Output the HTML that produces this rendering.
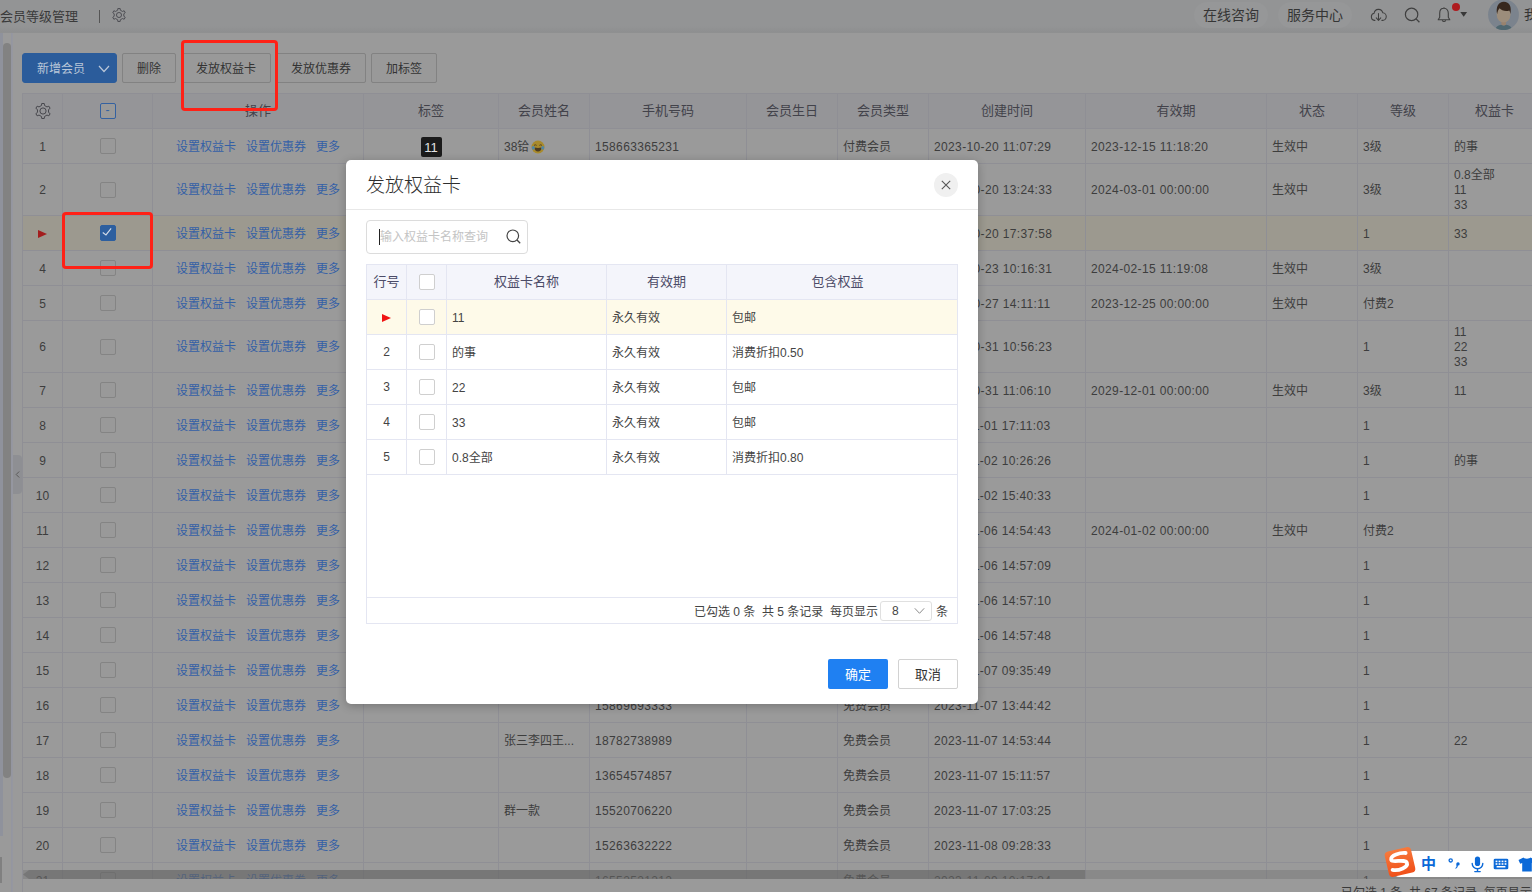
<!DOCTYPE html>
<html lang="zh-CN">
<head>
<meta charset="utf-8">
<title>会员等级管理</title>
<style>
*{box-sizing:border-box;margin:0;padding:0}
html,body{width:1532px;height:892px;overflow:hidden}
body{position:relative;background:#9a9a9a;font-family:"Liberation Sans","Noto Sans CJK SC",sans-serif;font-size:12px;color:#3c3c3c}
svg{display:block}
/* ---------- top bar ---------- */
#top{position:absolute;left:0;top:0;width:1532px;height:33px;background:linear-gradient(#939495 0,#939495 26px,#8e8f90 32px,#909191 33px)}
#top .ttl{position:absolute;left:0;top:7px;font-size:13px;line-height:19px;color:#3a3a3a;white-space:nowrap}
#top .sep{position:absolute;left:99px;top:10px;width:1px;height:13px;background:#555}
#top .gear{position:absolute;left:111.500px;top:7.500px;width:14px;height:14px}
.g2{width:16px;height:16px;margin:0 auto}
.pill{position:absolute;top:2px;height:26px;border-radius:13px;background:#969798;font-size:14px;line-height:26px;text-align:center;color:#353535}
.ico{position:absolute}
/* ---------- left strip ---------- */
#ls1{position:absolute;left:11px;top:33px;width:2px;height:859px;background:linear-gradient(90deg,#9496a0 0,#9496a0 1px,#9798a0 2px)}
#ls2{position:absolute;left:3px;top:43px;width:8px;height:735px;background:#828282;border-radius:4px}
#ls0{position:absolute;left:0;top:33px;width:3px;height:803px;background:#8f929c}
#ls3{position:absolute;left:0;top:857px;width:2px;height:26px;background:#808080}
#hand{position:absolute;left:13px;top:455px;width:9px;height:39px;background:#8e8f93;border-radius:0 4px 4px 0}
/* ---------- toolbar ---------- */
.btn{position:absolute;top:53px;height:30px;border:1px solid #828282;border-radius:2px;background:#999;font-size:12px;line-height:30px;text-align:center;color:#333}
.btn.pri{background:#2b5c9b;border-color:#2b5c9b;color:#b9c6d8;border-radius:3px;text-align:left;padding-left:14px}
/* ---------- grid ---------- */
#grid{position:absolute;left:22px;top:93px;width:1600px;border-collapse:collapse;table-layout:fixed;background:#9a9a9a}
#grid td,#grid th{border:1px solid #8f8f95;padding:2px 0 0 5px;font-weight:normal;text-align:left;white-space:nowrap;overflow:hidden;font-size:12px;line-height:16px;color:#3d3d3d}
#grid th{height:35px;background:#959598;font-size:13px;text-align:center;padding:0;color:#42424a}
#grid td.c{text-align:center;padding:2px 0 0 0}
#grid td.n{letter-spacing:.36px}
#grid tr.tall td{padding-top:0}
#grid tr.tall td.ml{line-height:15px;padding-top:2px}
#grid tr.tall .cb{top:0}
#grid tr.sel td{background:#9c998f}
#grid a{color:#3460a6;margin:0 5px}
.cb{display:inline-block;width:16px;height:16px;border:1px solid #848484;border-radius:2px;vertical-align:middle;background:#999;position:relative;top:-1px}
.cb.on{background:#2d5f9f;border-color:#2d5f9f}
.cb.on svg{width:14px;height:14px}
.cb.hd{top:0;border-color:#3461a0;color:#3461a0;font-size:12px;line-height:13px;text-align:center}
.tri{display:inline-block;width:0;height:0;border-left:9px solid #a31d1d;border-top:4px solid transparent;border-bottom:4px solid transparent;vertical-align:middle;position:relative;top:-1px}
.tag{display:inline-block;width:21px;height:20px;background:#1b1b1b;color:#e2e2e2;border-radius:2px;font-size:13px;line-height:21px;vertical-align:middle;position:relative;top:0}
.emo{display:inline-block;position:relative;width:14px;height:14px;vertical-align:-3px;margin-left:2px;font-size:0;line-height:0;overflow:hidden}
.emo svg{position:absolute;left:0;top:0;width:14px;height:14px}
#hsbt{position:absolute;left:23px;top:870px;width:1509px;height:9px;background:rgba(110,110,110,.38)}
#hsb{position:absolute;left:23px;top:870px;width:1062px;height:9px}
#hsba{position:absolute;left:23px;top:870px;width:0;height:0;border-right:6px solid #7a7a7a;border-top:4.500px solid transparent;border-bottom:4.500px solid transparent}
#foot{position:absolute;left:23px;top:879px;width:1509px;height:13px;background:#9a9a9a}
#foot span{position:absolute;left:1318px;top:5px;font-size:12px;line-height:18px;white-space:nowrap;color:#3a3a3a}
.red{position:absolute;border:3px solid #ff2116;border-radius:4px}

/* ---------- modal ---------- */
#modal{position:absolute;left:346px;top:160px;width:632px;height:544px;background:#fff;border-radius:5px;box-shadow:0 2px 10px rgba(0,0,0,.24)}
#modal .hd{position:absolute;left:0;top:0;width:632px;height:50px;border-bottom:1px solid #e8e8e8}
#modal .hd b{position:absolute;left:20px;top:12px;font-weight:300;font-size:19px;line-height:28px;color:#2e2e2e;white-space:nowrap}
#modal .x{position:absolute;left:588px;top:13px;width:24px;height:24px;border-radius:12px;background:#f0f0f0}
#modal .x svg{position:absolute;left:7px;top:7px;width:10px;height:10px}
#modal .inp{position:absolute;left:20px;top:60px;width:162px;height:34px;border:1px solid #dcdcdc;border-radius:4px}
#modal .inp span{position:absolute;left:13px;top:7px;font-size:12px;line-height:18px;color:#c4c4c4;white-space:nowrap}
#modal .inp i{position:absolute;left:12px;top:8px;width:1px;height:16px;background:#222}
#modal .inp svg{position:absolute;left:138px;top:7px;width:17px;height:17px}
#mt{position:absolute;left:20px;top:104px;width:591px;border-collapse:collapse;table-layout:fixed}
#mt td,#mt th{border:1px solid #e4e6f2;height:35px;font-weight:normal;font-size:12px;line-height:16px;color:#444;text-align:left;padding:2px 0 0 5px;white-space:nowrap}
#mt th{background:#f4f5fb;font-size:13px;color:#4c4c68;text-align:center;padding:0}
#mt td.c{text-align:center;padding:0}
#mt tr.cur td{background:#fefae9}
.cb2{display:inline-block;width:16px;height:16px;border:1px solid #cfcfcf;border-radius:2px;background:#fff;vertical-align:middle}
.tri2{display:inline-block;width:0;height:0;border-left:9px solid #f01414;border-top:4px solid transparent;border-bottom:4px solid transparent;vertical-align:middle}
#mbox{position:absolute;left:20px;top:104px;width:592px;height:360px;border:1px solid #e4e6f2;pointer-events:none}
#mfoot{position:absolute;left:20px;top:437px;width:592px;height:27px;border:1px solid #e4e6f2;font-size:12px;color:#444}
#mfoot .t{position:absolute;top:5px;line-height:18px;white-space:nowrap}
#mfoot .sel{position:absolute;left:513px;top:3px;width:52px;height:20px;border:1px solid #e0e0e0;border-radius:3px}
#mfoot .sel span{position:absolute;left:11px;top:0;line-height:18px}
#mfoot .sel svg{position:absolute;left:33px;top:5px;width:11px;height:8px}
.mb{position:absolute;top:499px;width:60px;height:30px;border-radius:2px;font-size:13px;line-height:32px;text-align:center}
.mb.ok{left:482px;background:#1f80f2;color:#fff}
.mb.no{left:552px;background:#fff;border:1px solid #d2d2d2;color:#333;line-height:30px}

/* ---------- IME ---------- */
#ime .bar{position:absolute;left:1395px;top:851px;width:150px;height:26px;background:#fff;border-radius:4px 0 0 4px}
#ime .lg{position:absolute;left:1383px;top:845px;width:34px;height:34px}
#ime .zh{position:absolute;left:1421px;top:853px;font-size:15px;line-height:22px;font-weight:bold;color:#0b69d8}
#ime .pn{position:absolute;left:1448px;top:857px;width:12px;height:14px}
#ime .mic{position:absolute;left:1471px;top:856px;width:13px;height:17px}
#ime .kb{position:absolute;left:1493px;top:858px;width:16px;height:12px}
#ime .sh{position:absolute;left:1518px;top:857px;width:18px;height:15px}
</style>
</head>
<body>
<div id="top">
  <div class="ttl">会员等级管理</div>
  <div class="sep"></div>
  <svg class="gear" viewBox="0 0 16 16"><path d="M6.47 2.51 L6.73 0.51 L9.27 0.51 L9.53 2.51 L11.99 3.93 L13.86 3.16 L15.12 5.35 L13.52 6.58 L13.52 9.42 L15.12 10.65 L13.86 12.84 L11.99 12.07 L9.53 13.49 L9.27 15.49 L6.73 15.49 L6.47 13.49 L4.01 12.07 L2.14 12.84 L0.88 10.65 L2.48 9.42 L2.48 6.58 L0.88 5.35 L2.14 3.16 L4.01 3.93Z" fill="none" stroke="#45454b" stroke-width="1" stroke-linejoin="round"/><circle cx="8" cy="8" r="2.900" fill="none" stroke="#45454b" stroke-width="1"/></svg>
  <div class="pill" style="left:1194px;width:74px">在线咨询</div>
  <div class="pill" style="left:1278px;width:74px">服务中心</div>
  <svg class="ico" style="left:1370px;top:7px;width:17px;height:16px" viewBox="0 0 18 16" preserveAspectRatio="none"><path d="M5.200 13.400H4.600A3.600 3.600 0 0 1 4.300 6.300A4.800 4.800 0 0 1 13.600 5.800A3.800 3.800 0 0 1 13.200 13.400H12.600" fill="none" stroke="#3f3f3f" stroke-width="1.1" stroke-linecap="round"/><path d="M9 6.500V13.200M6.600 10.900L9 13.400L11.400 10.900" fill="none" stroke="#3f3f3f" stroke-width="1.1" stroke-linecap="round" stroke-linejoin="round"/></svg>
  <svg class="ico" style="left:1404px;top:7px;width:17px;height:17px" viewBox="0 0 17 17"><circle cx="7.600" cy="7.400" r="6.200" fill="none" stroke="#3f3f3f" stroke-width="1.2"/><path d="M12.100 11.900L15.400 15.200" stroke="#3f3f3f" stroke-width="1.3" fill="none"/></svg>
  <svg class="ico" style="left:1436px;top:6px;width:16px;height:18px" viewBox="0 0 16 18"><path d="M8 1.300V2.300M8 2.300C5.200 2.300 3.700 4.500 3.700 7.200V11.200L2.200 13.700H13.800L12.300 11.200V7.200C12.300 4.500 10.800 2.300 8 2.300Z" fill="none" stroke="#3f3f3f" stroke-width="1.1" stroke-linejoin="round"/><path d="M6.300 14.300A1.800 1.800 0 0 0 9.700 14.300" fill="none" stroke="#3f3f3f" stroke-width="1.1"/></svg>
  <div class="ico" style="left:1452px;top:3px;width:8px;height:8px;border-radius:4px;background:#ae1b1f"></div>
  <svg class="ico" style="left:1460px;top:12px;width:8px;height:6px" viewBox="0 0 8 6"><path d="M.3 0H7.100L3.700 4.800Z" fill="#383838"/></svg>
  <svg class="ico" style="left:1488px;top:-1px;width:31px;height:31px" viewBox="0 0 31 31"><defs><clipPath id="avc"><circle cx="15.500" cy="15.700" r="15.400"/></clipPath></defs><g clip-path="url(#avc)"><rect width="31" height="31" fill="#7b838d"/><path d="M7.500 31C7.500 27.500 10.500 26.200 13.300 25.700Q15.700 27.300 18.200 25.700C21 26.200 24 27.500 24 31Z" fill="#4f6770"/><path d="M13.400 21.500H18V25.800Q15.700 27.400 13.400 25.800Z" fill="#98826d"/><ellipse cx="15.600" cy="15.600" rx="6.900" ry="7.900" fill="#9c8d7b"/><path d="M9.100 15.200C7.600 8 10.500 2.800 15.800 2.800C21.500 2.800 24 8 22.300 15.200C22.200 13.300 21.800 12.200 21.300 11.500C17.500 12.800 13.500 11.500 11.500 9.300C10.300 10.800 9.500 12.800 9.100 15.200Z" fill="#37271d"/></g></svg>
  <div class="ico" style="left:1524px;top:5px;font-size:13px;line-height:20px;color:#353535;white-space:nowrap">我的</div>
</div>
<div id="ls1"></div><div id="ls3"></div><div id="ls0"></div><div id="ls2"></div><div id="hand"><svg viewBox="0 0 9 39" style="width:9px;height:39px"><path d="M6.200 16.500L3.200 19.500L6.200 22.500" fill="none" stroke="#5a5a5a" stroke-width="1"/></svg></div>

<div class="btn pri" style="left:22px;width:95px">新增会员<svg style="position:absolute;left:75px;top:11px;width:12px;height:8px" viewBox="0 0 12 8"><path d="M1 1L6 6.500L11 1" fill="none" stroke="#b9c6d8" stroke-width="1.200"/></svg></div>
<div class="btn" style="left:122px;width:54px">删除</div>
<div class="btn" style="left:181px;width:90px">发放权益卡</div>
<div class="btn" style="left:276px;width:90px">发放优惠券</div>
<div class="btn" style="left:371px;width:66px">加标签</div>

<table id="grid">
<colgroup><col style="width:40px"><col style="width:90px"><col style="width:211px"><col style="width:135px"><col style="width:91px"><col style="width:157px"><col style="width:91px"><col style="width:91px"><col style="width:157px"><col style="width:181px"><col style="width:91px"><col style="width:91px"><col style="width:174px"></colgroup>
<thead><tr><th><svg class="g2" viewBox="0 0 16 16"><path d="M6.47 2.51 L6.73 0.51 L9.27 0.51 L9.53 2.51 L11.99 3.93 L13.86 3.16 L15.12 5.35 L13.52 6.58 L13.52 9.42 L15.12 10.65 L13.86 12.84 L11.99 12.07 L9.53 13.49 L9.27 15.49 L6.73 15.49 L6.47 13.49 L4.01 12.07 L2.14 12.84 L0.88 10.65 L2.48 9.42 L2.48 6.58 L0.88 5.35 L2.14 3.16 L4.01 3.93Z" fill="none" stroke="#47474d" stroke-width="1" stroke-linejoin="round"/><circle cx="8" cy="8" r="3.100" fill="none" stroke="#47474d" stroke-width="1"/></svg></th><th><span class="cb hd">-</span></th><th>操作</th><th>标签</th><th>会员姓名</th><th>手机号码</th><th>会员生日</th><th>会员类型</th><th>创建时间</th><th>有效期</th><th>状态</th><th>等级</th><th style="text-align:left;padding-left:26px">权益卡</th></tr></thead>
<tbody>
<tr style="height:35px"><td class="c">1</td><td class="c"><span class="cb"></span></td><td class="c op"><a>设置权益卡</a><a>设置优惠券</a><a>更多</a></td><td class="c"><span class="tag">11</span></td><td>38铪<span class="emo">😂<svg viewBox="0 0 14 14"><circle cx="7" cy="7" r="6.5" fill="#a88a2c"/><path d="M3.4 7.6 Q7 8.4 10.6 7.6 Q10.2 11.6 7 11.6 Q3.8 11.6 3.4 7.6Z" fill="#4a3a22"/><path d="M3 5.4 Q4.3 4.2 5.6 5.4 M8.4 5.4 Q9.7 4.2 11 5.4" stroke="#4a3a22" stroke-width=".9" fill="none"/><ellipse cx="2.3" cy="7.8" rx="1.5" ry="1.9" fill="#4f86a8"/><ellipse cx="11.7" cy="7.8" rx="1.5" ry="1.9" fill="#4f86a8"/></svg></span></td><td class="n">158663365231</td><td></td><td>付费会员</td><td class="n">2023-10-20 11:07:29</td><td class="n">2023-12-15 11:18:20</td><td>生效中</td><td>3级</td><td>的事</td></tr>
<tr class="tall" style="height:52px"><td class="c">2</td><td class="c"><span class="cb"></span></td><td class="c op"><a>设置权益卡</a><a>设置优惠券</a><a>更多</a></td><td class="c"></td><td></td><td class="n">13500001111</td><td></td><td>付费会员</td><td class="n">2023-10-20 13:24:33</td><td class="n">2024-03-01 00:00:00</td><td>生效中</td><td>3级</td><td class="ml">0.8全部<br>11<br>33</td></tr>
<tr class="sel" style="height:35px"><td class="c"><i class="tri"></i></td><td class="c"><span class="cb on"><svg viewBox="0 0 16 16"><path d="M2 7.400 L5.700 10.200 L11.600 2.800" fill="none" stroke="#d3dbe8" stroke-width="1.300"/></svg></span></td><td class="c op"><a>设置权益卡</a><a>设置优惠券</a><a>更多</a></td><td class="c"></td><td></td><td class="n">13500002222</td><td></td><td>免费会员</td><td class="n">2023-10-20 17:37:58</td><td class="n"></td><td></td><td>1</td><td>33</td></tr>
<tr style="height:35px"><td class="c">4</td><td class="c"><span class="cb"></span></td><td class="c op"><a>设置权益卡</a><a>设置优惠券</a><a>更多</a></td><td class="c"></td><td></td><td class="n">13500003333</td><td></td><td>付费会员</td><td class="n">2023-10-23 10:16:31</td><td class="n">2024-02-15 11:19:08</td><td>生效中</td><td>3级</td><td></td></tr>
<tr style="height:35px"><td class="c">5</td><td class="c"><span class="cb"></span></td><td class="c op"><a>设置权益卡</a><a>设置优惠券</a><a>更多</a></td><td class="c"></td><td></td><td class="n">13500004444</td><td></td><td>付费会员</td><td class="n">2023-10-27 14:11:11</td><td class="n">2023-12-25 00:00:00</td><td>生效中</td><td>付费2</td><td></td></tr>
<tr class="tall" style="height:52px"><td class="c">6</td><td class="c"><span class="cb"></span></td><td class="c op"><a>设置权益卡</a><a>设置优惠券</a><a>更多</a></td><td class="c"></td><td></td><td class="n">13500005555</td><td></td><td>免费会员</td><td class="n">2023-10-31 10:56:23</td><td class="n"></td><td></td><td>1</td><td class="ml">11<br>22<br>33</td></tr>
<tr style="height:35px"><td class="c">7</td><td class="c"><span class="cb"></span></td><td class="c op"><a>设置权益卡</a><a>设置优惠券</a><a>更多</a></td><td class="c"></td><td></td><td class="n">13500006666</td><td></td><td>付费会员</td><td class="n">2023-10-31 11:06:10</td><td class="n">2029-12-01 00:00:00</td><td>生效中</td><td>3级</td><td>11</td></tr>
<tr style="height:35px"><td class="c">8</td><td class="c"><span class="cb"></span></td><td class="c op"><a>设置权益卡</a><a>设置优惠券</a><a>更多</a></td><td class="c"></td><td></td><td class="n">13500007777</td><td></td><td>免费会员</td><td class="n">2023-11-01 17:11:03</td><td class="n"></td><td></td><td>1</td><td></td></tr>
<tr style="height:35px"><td class="c">9</td><td class="c"><span class="cb"></span></td><td class="c op"><a>设置权益卡</a><a>设置优惠券</a><a>更多</a></td><td class="c"></td><td></td><td class="n">13500008888</td><td></td><td>免费会员</td><td class="n">2023-11-02 10:26:26</td><td class="n"></td><td></td><td>1</td><td>的事</td></tr>
<tr style="height:35px"><td class="c">10</td><td class="c"><span class="cb"></span></td><td class="c op"><a>设置权益卡</a><a>设置优惠券</a><a>更多</a></td><td class="c"></td><td></td><td class="n">13500009999</td><td></td><td>免费会员</td><td class="n">2023-11-02 15:40:33</td><td class="n"></td><td></td><td>1</td><td></td></tr>
<tr style="height:35px"><td class="c">11</td><td class="c"><span class="cb"></span></td><td class="c op"><a>设置权益卡</a><a>设置优惠券</a><a>更多</a></td><td class="c"></td><td></td><td class="n">13500010000</td><td></td><td>付费会员</td><td class="n">2023-11-06 14:54:43</td><td class="n">2024-01-02 00:00:00</td><td>生效中</td><td>付费2</td><td></td></tr>
<tr style="height:35px"><td class="c">12</td><td class="c"><span class="cb"></span></td><td class="c op"><a>设置权益卡</a><a>设置优惠券</a><a>更多</a></td><td class="c"></td><td></td><td class="n">13500011111</td><td></td><td>免费会员</td><td class="n">2023-11-06 14:57:09</td><td class="n"></td><td></td><td>1</td><td></td></tr>
<tr style="height:35px"><td class="c">13</td><td class="c"><span class="cb"></span></td><td class="c op"><a>设置权益卡</a><a>设置优惠券</a><a>更多</a></td><td class="c"></td><td></td><td class="n">13500012222</td><td></td><td>免费会员</td><td class="n">2023-11-06 14:57:10</td><td class="n"></td><td></td><td>1</td><td></td></tr>
<tr style="height:35px"><td class="c">14</td><td class="c"><span class="cb"></span></td><td class="c op"><a>设置权益卡</a><a>设置优惠券</a><a>更多</a></td><td class="c"></td><td></td><td class="n">13500013333</td><td></td><td>免费会员</td><td class="n">2023-11-06 14:57:48</td><td class="n"></td><td></td><td>1</td><td></td></tr>
<tr style="height:35px"><td class="c">15</td><td class="c"><span class="cb"></span></td><td class="c op"><a>设置权益卡</a><a>设置优惠券</a><a>更多</a></td><td class="c"></td><td></td><td class="n">13500014444</td><td></td><td>免费会员</td><td class="n">2023-11-07 09:35:49</td><td class="n"></td><td></td><td>1</td><td></td></tr>
<tr style="height:35px"><td class="c">16</td><td class="c"><span class="cb"></span></td><td class="c op"><a>设置权益卡</a><a>设置优惠券</a><a>更多</a></td><td class="c"></td><td></td><td class="n">15869693333</td><td></td><td>免费会员</td><td class="n">2023-11-07 13:44:42</td><td class="n"></td><td></td><td>1</td><td></td></tr>
<tr style="height:35px"><td class="c">17</td><td class="c"><span class="cb"></span></td><td class="c op"><a>设置权益卡</a><a>设置优惠券</a><a>更多</a></td><td class="c"></td><td>张三李四王...</td><td class="n">18782738989</td><td></td><td>免费会员</td><td class="n">2023-11-07 14:53:44</td><td class="n"></td><td></td><td>1</td><td>22</td></tr>
<tr style="height:35px"><td class="c">18</td><td class="c"><span class="cb"></span></td><td class="c op"><a>设置权益卡</a><a>设置优惠券</a><a>更多</a></td><td class="c"></td><td></td><td class="n">13654574857</td><td></td><td>免费会员</td><td class="n">2023-11-07 15:11:57</td><td class="n"></td><td></td><td>1</td><td></td></tr>
<tr style="height:35px"><td class="c">19</td><td class="c"><span class="cb"></span></td><td class="c op"><a>设置权益卡</a><a>设置优惠券</a><a>更多</a></td><td class="c"></td><td>群一款</td><td class="n">15520706220</td><td></td><td>免费会员</td><td class="n">2023-11-07 17:03:25</td><td class="n"></td><td></td><td>1</td><td></td></tr>
<tr style="height:35px"><td class="c">20</td><td class="c"><span class="cb"></span></td><td class="c op"><a>设置权益卡</a><a>设置优惠券</a><a>更多</a></td><td class="c"></td><td></td><td class="n">15263632222</td><td></td><td>免费会员</td><td class="n">2023-11-08 09:28:33</td><td class="n"></td><td></td><td>1</td><td></td></tr>
<tr style="height:35px"><td class="c">21</td><td class="c"><span class="cb"></span></td><td class="c op"><a>设置权益卡</a><a>设置优惠券</a><a>更多</a></td><td class="c"></td><td></td><td class="n">16552521212</td><td></td><td>免费会员</td><td class="n">2023-11-09 10:17:34</td><td class="n"></td><td></td><td>1</td><td></td></tr>

</tbody>
</table>
<div id="hsbt"></div><svg id="hsb" viewBox="0 0 1062 9"><path d="M0 4.500L6 0H1062V9H6Z" fill="rgba(95,95,95,.42)"/></svg>
<div id="foot"><span>已勾选 1 条&nbsp; 共 67 条记录&nbsp; 每页显示</span></div>

<div id="modal">
  <div class="hd"><b>发放权益卡</b><div class="x"><svg viewBox="0 0 10 10"><path d="M.8 .8L9.200 9.200M9.200 .8L.8 9.200" stroke="#555" stroke-width="1.100" fill="none"/></svg></div></div>
  <div class="inp"><span>输入权益卡名称查询</span><i></i><svg viewBox="0 0 17 17"><circle cx="7.8" cy="7.8" r="5.8" fill="none" stroke="#444" stroke-width="1.2"/><path d="M12 12L15.200 15.200" stroke="#444" stroke-width="1.3" fill="none"/></svg></div>
  <div id="mbox"></div>
  <table id="mt">
  <colgroup><col style="width:40px"><col style="width:40px"><col style="width:160px"><col style="width:120px"><col style="width:231px"></colgroup>
  <thead><tr><th>行号</th><th><span class="cb2"></span></th><th>权益卡名称</th><th>有效期</th><th style="padding-right:9px">包含权益</th></tr></thead>
  <tbody>
<tr class="cur"><td class="c"><i class="tri2"></i></td><td class="c"><span class="cb2"></span></td><td>11</td><td>永久有效</td><td>包邮</td></tr>
<tr><td class="c">2</td><td class="c"><span class="cb2"></span></td><td>的事</td><td>永久有效</td><td>消费折扣0.50</td></tr>
<tr><td class="c">3</td><td class="c"><span class="cb2"></span></td><td>22</td><td>永久有效</td><td>包邮</td></tr>
<tr><td class="c">4</td><td class="c"><span class="cb2"></span></td><td>33</td><td>永久有效</td><td>包邮</td></tr>
<tr><td class="c">5</td><td class="c"><span class="cb2"></span></td><td>0.8全部</td><td>永久有效</td><td>消费折扣0.80</td></tr>

  </tbody></table>
  <div id="mfoot"><span class="t" style="left:327px">已勾选 0 条&nbsp; 共 5 条记录&nbsp; 每页显示</span><div class="sel"><span>8</span><svg viewBox="0 0 11 8"><path d="M.8 1.300L5.500 6.300L10.200 1.300" fill="none" stroke="#8a8a8a" stroke-width="1"/></svg></div><span class="t" style="left:569px">条</span></div>
  <div class="mb ok">确定</div><div class="mb no">取消</div>
</div>

<div class="red" style="left:181px;top:40px;width:97px;height:71px"></div>
<div class="red" style="left:62px;top:212px;width:91px;height:57px"></div>
<div id="ime"><div class="bar"></div>
<svg class="lg" viewBox="0 0 34 34"><defs><linearGradient id="og" x1="0" y1="0" x2="0" y2="1"><stop offset="0" stop-color="#f77a3c"/><stop offset="1" stop-color="#f0501a"/></linearGradient></defs><g transform="rotate(-13 17 17)"><rect x="3.500" y="4" width="27" height="26" rx="4" fill="url(#og)"/><path d="M24.500 9.500C19 7.800 9.500 8.200 9 12.500C8.600 16.400 23 14.600 23.500 19.500C24 24 14 25.500 8 23" fill="none" stroke="#fff" stroke-width="3.800" stroke-linecap="round"/></g></svg>
<span class="zh">中</span>
<svg class="pn" viewBox="0 0 12 14"><circle cx="2.700" cy="3.400" r="1.600" fill="none" stroke="#0b69d8" stroke-width="1.300"/><path d="M8.300 6.800A1.700 1.700 0 1 1 9.900 8.600C9.900 10 9 11.200 7.600 11.800L7.200 11C8 10.600 8.500 10 8.500 9.200C8.300 8.600 8.300 7.600 8.300 6.800Z" fill="#0b69d8"/></svg>
<svg class="mic" viewBox="0 0 13 17"><rect x="3.900" y="0.500" width="5.200" height="9.600" rx="2.600" fill="#0b69d8"/><path d="M1.200 7.500A5.300 5.300 0 0 0 11.800 7.500M6.500 12.800V15.200M3.800 15.600H9.200" fill="none" stroke="#0b69d8" stroke-width="1.400" stroke-linecap="round"/></svg>
<svg class="kb" viewBox="0 0 16 12"><rect x=".7" y=".7" width="14.600" height="10.600" rx="1.400" fill="#0b69d8"/><g fill="#fff"><rect x="2.600" y="2.600" width="1.800" height="1.600"/><rect x="5.600" y="2.600" width="1.800" height="1.600"/><rect x="8.600" y="2.600" width="1.800" height="1.600"/><rect x="11.600" y="2.600" width="1.800" height="1.600"/><rect x="2.600" y="5.200" width="1.800" height="1.600"/><rect x="5.600" y="5.200" width="1.800" height="1.600"/><rect x="8.600" y="5.200" width="1.800" height="1.600"/><rect x="11.600" y="5.200" width="1.800" height="1.600"/><rect x="3.600" y="8" width="8.800" height="1.500"/></g></svg>
<svg class="sh" viewBox="0 0 18 15"><path d="M5.500 0.500C6.500 2 11.500 2 12.500 0.500L17.500 3L15.800 6.800L13.800 6V14.500H4.200V6L2.200 6.800L0.500 3Z" fill="#0b69d8"/></svg>
</div>
</body>
</html>
